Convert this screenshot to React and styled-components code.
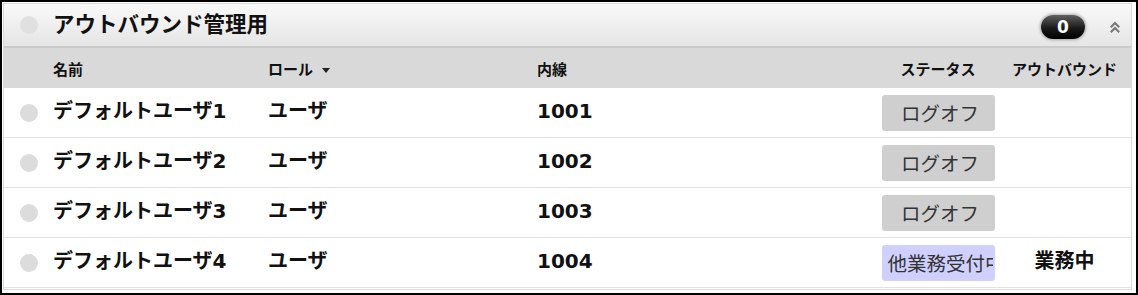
import React from 'react';
import styled, { createGlobalStyle } from 'styled-components';

const Global = createGlobalStyle`
  html, body { margin: 0; padding: 0; background: #fff; }
  body { font-family: "DejaVu Sans", "Noto Sans CJK JP", sans-serif; color: #111; }
  * { box-sizing: border-box; }
`;

const Frame = styled.div`
  width: 1138px;
  height: 295px;
  border: 2px solid #000;
  padding: 1px 4px 3px 1px;
  display: flex;
`;

const Panel = styled.section`
  flex: 1;
  border: 1px solid #dadada;
  display: flex;
  flex-direction: column;
  overflow: hidden;
`;

const Header = styled.header`
  height: 44px;
  flex: none;
  display: flex;
  align-items: center;
  padding: 0 10px 0 16px;
  background: linear-gradient(#f9f9f9, #e5e5e5);
  border-bottom: 2px solid #cbcbcb;
`;

const Dot = styled.span`
  flex: none;
  width: 18px;
  height: 18px;
  border-radius: 50%;
  background: ${(p) => (p.$light ? '#e0e0e0' : '#dcdcdc')};
`;

const Title = styled.h1`
  flex: 1;
  margin: 0 0 0 15px;
  font-family: "Noto Sans CJK JP", sans-serif;
  font-size: 21.5px;
  line-height: 1;
  font-weight: 700;
  color: #111;
  position: relative;
  top: -2px;
`;

const Badge = styled.span`
  flex: none;
  width: 44px;
  height: 24px;
  border-radius: 12px;
  background: linear-gradient(#606060, #1a1a1a 55%, #000);
  box-shadow: 0 0 3px 1px rgba(0, 0, 0, 0.3);
  color: #fff;
  font-family: "DejaVu Sans", sans-serif;
  font-weight: 700;
  font-size: 17px;
  line-height: 24px;
  text-align: center;
  margin-top: 4px;
`;

const Collapse = styled.button`
  flex: none;
  margin-left: 24px;
  padding: 0;
  border: 0;
  background: none;
  width: 12px;
  height: 12px;
  display: flex;
  margin-top: 4px;
`;

const Grid = styled.div`
  display: grid;
  grid-template-columns: 49px 215px 269px 1fr 120px 133px;
  align-items: center;
`;

const HeadRow = styled(Grid)`
  height: 40px;
  flex: none;
  background: #d9d9d9;
  font-family: "Noto Sans CJK JP", sans-serif;
  font-weight: 700;
  font-size: 15px;
  line-height: 1;
`;

const HeadCell = styled.div`
  grid-column: ${(p) => p.$col};
  text-align: ${(p) => p.$align || 'left'};
  white-space: nowrap;
`;

const Caret = styled.span`
  display: inline-block;
  margin-left: 9px;
  width: 0;
  height: 0;
  border-left: 4px solid transparent;
  border-right: 4px solid transparent;
  border-top: 5px solid #222;
  vertical-align: middle;
`;

const Body = styled.div`
  flex: 1;
  display: flex;
  flex-direction: column;
`;

const Row = styled(Grid)`
  height: 50px;
  flex: none;
  border-bottom: 1px solid #e2e2e2;
  font-weight: 700;
  font-size: 20px;
  line-height: 1;
`;

const DotCell = styled.div`
  display: flex;
  justify-content: center;
  padding-top: 1px;
`;

const Cell = styled.div`
  white-space: nowrap;
  text-align: ${(p) => p.$align || 'left'};
  position: relative;
  top: -2px;
`;

const StatusButton = styled.div`
  justify-self: center;
  width: 113px;
  height: 36px;
  border-radius: 3px;
  border: 2px solid ${(p) => p.$bg};
  background: ${(p) => p.$bg};
  padding: 0 0 0 4px;
  overflow: hidden;
  white-space: nowrap;
  text-align: center;
  font-family: "Noto Sans CJK JP", sans-serif;
  font-weight: 400;
  font-size: 19.5px;
  line-height: 31px;
  color: #333;
`;

const statusColors = {
  'ログオフ': '#cfcfcf',
  '他業務受付中': '#d0d0ff',
};

const users = [
  { name: 'デフォルトユーザ1', role: 'ユーザ', ext: '1001', status: 'ログオフ', out: '' },
  { name: 'デフォルトユーザ2', role: 'ユーザ', ext: '1002', status: 'ログオフ', out: '' },
  { name: 'デフォルトユーザ3', role: 'ユーザ', ext: '1003', status: 'ログオフ', out: '' },
  { name: 'デフォルトユーザ4', role: 'ユーザ', ext: '1004', status: '他業務受付中', out: '業務中' },
];

export default function App() {
  return (
    <>
      <Global />
      <Frame>
        <Panel>
          <Header>
            <Dot $light />
            <Title>アウトバウンド管理用</Title>
            <Badge>0</Badge>
            <Collapse aria-label="collapse">
              <svg width="12" height="12" viewBox="0 0 12 12" fill="none" stroke="#777" strokeWidth="2" strokeLinecap="square">
                <polyline points="2.5,5.5 6,2 9.5,5.5" />
                <polyline points="2.5,10.5 6,7 9.5,10.5" />
              </svg>
            </Collapse>
          </Header>
          <HeadRow>
            <HeadCell $col={2}>名前</HeadCell>
            <HeadCell $col={3}>ロール<Caret /></HeadCell>
            <HeadCell $col={4}>内線</HeadCell>
            <HeadCell $col={5} $align="center">ステータス</HeadCell>
            <HeadCell $col={6} $align="center">アウトバウンド</HeadCell>
          </HeadRow>
          <Body>
            {users.map((u) => (
              <Row key={u.ext}>
                <DotCell><Dot /></DotCell>
                <Cell>{u.name}</Cell>
                <Cell>{u.role}</Cell>
                <Cell>{u.ext}</Cell>
                <StatusButton $bg={statusColors[u.status]}>{u.status}</StatusButton>
                <Cell $align="center">{u.out}</Cell>
              </Row>
            ))}
          </Body>
        </Panel>
      </Frame>
    </>
  );
}
